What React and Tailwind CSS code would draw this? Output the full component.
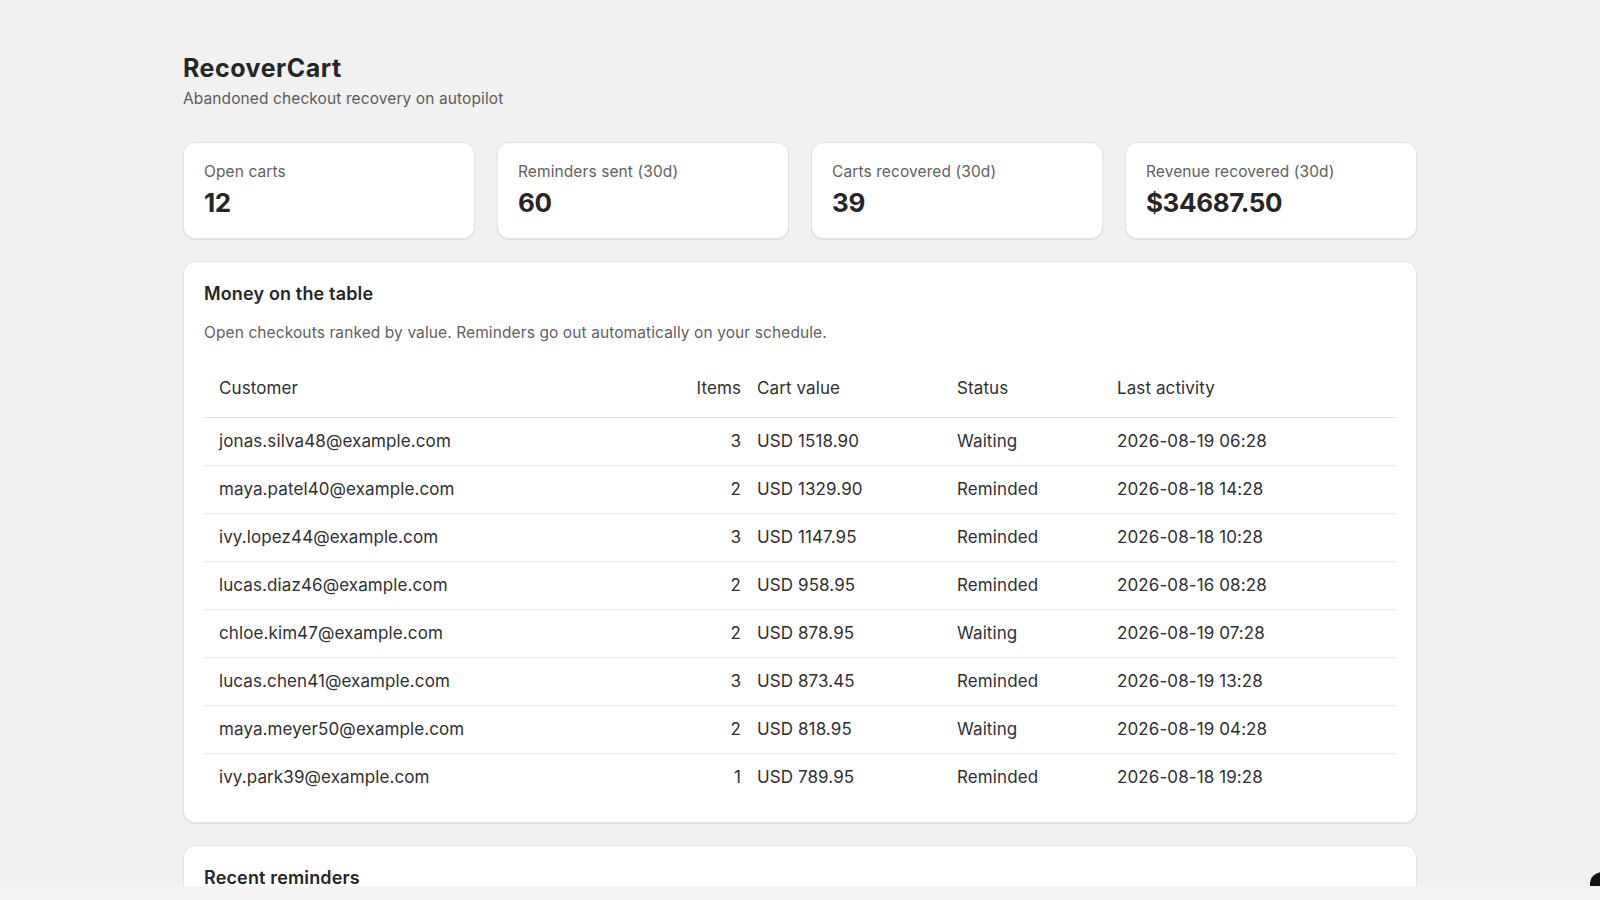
const stats = [
  { label: "Open carts", value: "12" },
  { label: "Reminders sent (30d)", value: "60" },
  { label: "Carts recovered (30d)", value: "39" },
  { label: "Revenue recovered (30d)", value: "$34687.50" },
]

const carts = [
  { email: "jonas.silva48@example.com", items: 3, value: "USD 1518.90", status: "Waiting", last: "2026-08-19 06:28" },
  { email: "maya.patel40@example.com", items: 2, value: "USD 1329.90", status: "Reminded", last: "2026-08-18 14:28" },
  { email: "ivy.lopez44@example.com", items: 3, value: "USD 1147.95", status: "Reminded", last: "2026-08-18 10:28" },
  { email: "lucas.diaz46@example.com", items: 2, value: "USD 958.95", status: "Reminded", last: "2026-08-16 08:28" },
  { email: "chloe.kim47@example.com", items: 2, value: "USD 878.95", status: "Waiting", last: "2026-08-19 07:28" },
  { email: "lucas.chen41@example.com", items: 3, value: "USD 873.45", status: "Reminded", last: "2026-08-19 13:28" },
  { email: "maya.meyer50@example.com", items: 2, value: "USD 818.95", status: "Waiting", last: "2026-08-19 04:28" },
  { email: "ivy.park39@example.com", items: 1, value: "USD 789.95", status: "Reminded", last: "2026-08-18 19:28" },
]

// customer | items | cart value | status | last activity
const cols = "grid grid-cols-[477px_68px_200px_160px_1fr]"

const Card = ({ children, className = "" }) => (
  <div
    className={`bg-white rounded-[12px] border border-[#e3e3e3] shadow-[0_1px_1px_rgba(0,0,0,0.08)] ${className}`}
  >
    {children}
  </div>
)

const App = () => {
  return (
    <div className="relative w-[1600px] h-[900px] overflow-hidden bg-[#f4f4f4] font-['Inter',sans-serif] text-[#303030]">
      <div className="w-[1600px] h-[886px] overflow-hidden bg-[#f1f1f1]">
        <div className="w-[1234px] mx-auto pt-[52px]">
          <h1 className="text-[25px] leading-8 font-bold tracking-[0.5px] text-[#262626]">RecoverCart</h1>
          <p className="mt-[5px] text-[15.5px] leading-5 tracking-[0.1px] text-[#5c5c5c]">
            Abandoned checkout recovery on autopilot
          </p>

          <div className="mt-[33px] grid grid-cols-4 gap-[22px]">
            {stats.map((s) => (
              <Card key={s.label} className="h-[97px] px-5 pt-[19px]">
                <div className="text-[15.5px] leading-5 tracking-[0.1px] text-[#616161]">{s.label}</div>
                <div className="mt-[5px] text-[26px] leading-8 font-bold tracking-[-0.4px] text-[#262626]">
                  {s.value}
                </div>
              </Card>
            ))}
          </div>

          <Card className="mt-[22px] px-5 pt-5 pb-5">
            <h2 className="text-[18px] leading-6 font-semibold tracking-[0.15px] text-[#262626]">Money on the table</h2>
            <p className="mt-[17px] text-[15.5px] leading-5 tracking-[0.1px] text-[#616161]">
              Open checkouts ranked by value. Reminders go out automatically on your schedule.
            </p>

            <div className="mt-[33px] text-[17px] tracking-[0.1px]">
              <div className={`${cols} leading-6 pb-[17px] border-b border-[#e3e3e3]`}>
                <div className="pl-[15px]">Customer</div>
                <div className="pr-2 text-right">Items</div>
                <div className="px-2">Cart value</div>
                <div className="px-2">Status</div>
                <div className="px-2">Last activity</div>
              </div>
              {carts.map((c, i) => (
                <div
                  key={c.email}
                  className={`${cols} h-[48px] items-center ${i < carts.length - 1 ? "border-b border-[#ebebeb]" : ""}`}
                >
                  <div className="pl-[15px]">{c.email}</div>
                  <div className="pr-2 text-right">{c.items}</div>
                  <div className="px-2">{c.value}</div>
                  <div className="px-2">{c.status}</div>
                  <div className="px-2">{c.last}</div>
                </div>
              ))}
            </div>
          </Card>

          <Card className="mt-[22px] h-[200px] px-5 pt-5">
            <h2 className="text-[18px] leading-6 font-semibold tracking-[0.15px] text-[#262626]">Recent reminders</h2>
          </Card>
        </div>
      </div>
      <div className="absolute left-[1589px] top-[852px] w-[14px] h-[36px] rounded-br-[12px] border-r-2 border-[#e6e6e6]" />
      <div className="absolute left-[1590px] top-[872px] w-[12px] h-[14px] bg-[#111] rounded-tl-[12px]" />
    </div>
  )
}

export default App
